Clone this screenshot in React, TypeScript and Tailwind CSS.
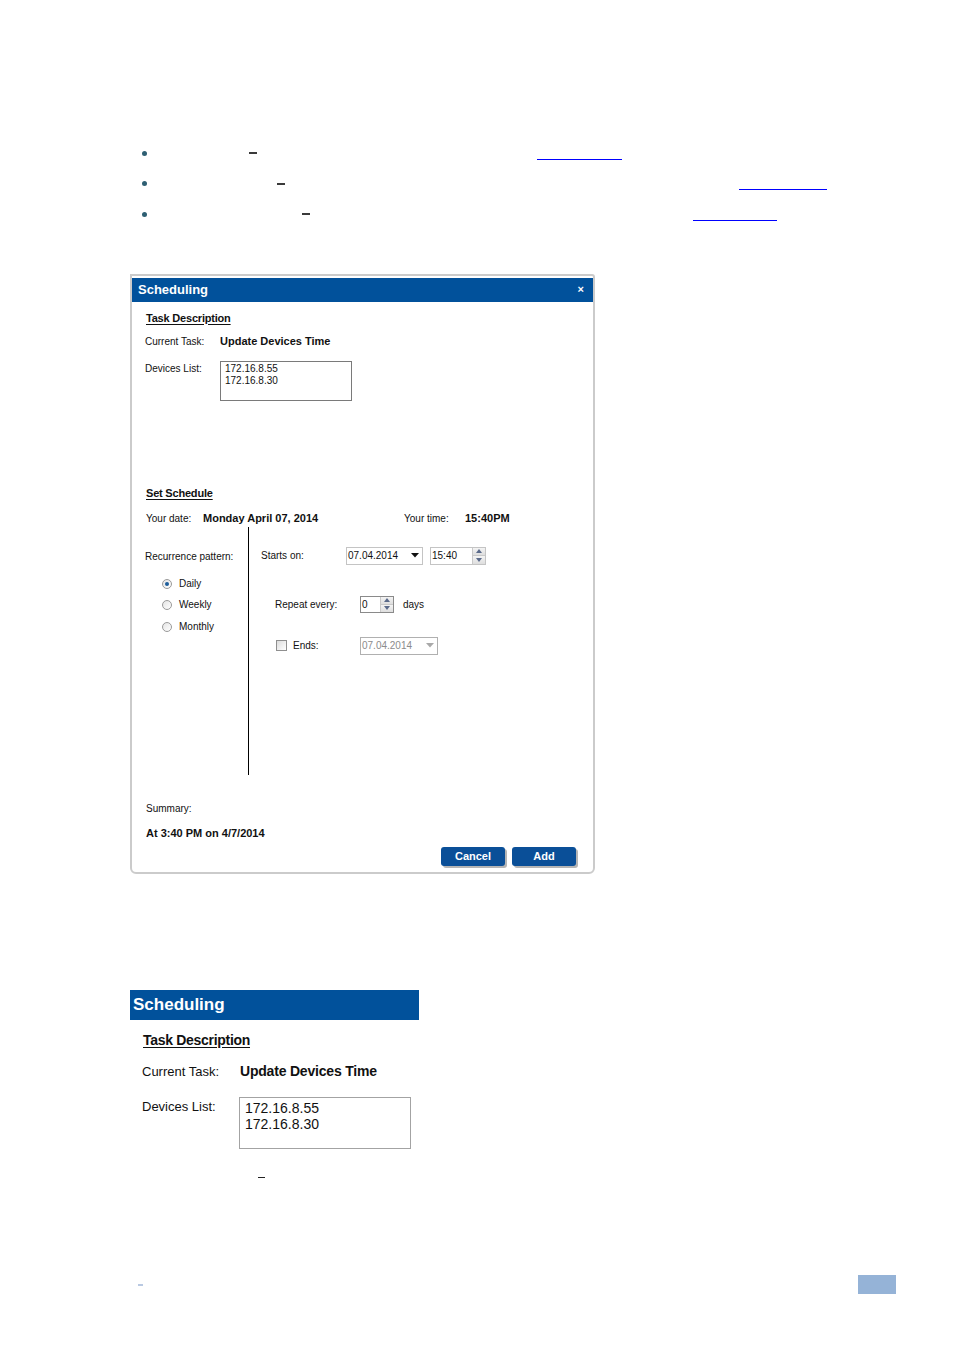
import React from 'react'

const FONT = { fontFamily: '"Liberation Sans", Arial, sans-serif' }

function BulletRow({ dash, link, linkW }: { dash: number; link: number; linkW: number }) {
  return (
    <div className="flex h-[30.5px] items-center">
      <span className="ml-[142px] h-[5px] w-[5px] rounded-full bg-[#2e5f73]" />
      <span className="h-[2px] w-[8px] bg-[#3a3a3a]" style={{ marginLeft: dash }} />
      <span className="mt-[12px] h-[1px] bg-[#0000ff]" style={{ marginLeft: link, width: linkW }} />
    </div>
  )
}

function DownArrow({ muted }: { muted?: boolean }) {
  return (
    <svg width="8" height="5" viewBox="0 0 8 5">
      <path d="M0 0 L8 0 L4 4.5 Z" fill={muted ? '#a9a9a9' : '#111'} />
    </svg>
  )
}

function SpinButtons() {
  return (
    <div className="flex w-[13px] flex-col border-l border-[#c9c9c9]">
      <div className="flex flex-1 items-center justify-center border-b border-[#c9c9c9] bg-gradient-to-b from-[#f4f4f4] to-[#dedede]">
        <svg width="6" height="4" viewBox="0 0 6 4"><path d="M0 4 L6 4 L3 0 Z" fill="#5a6a8a" /></svg>
      </div>
      <div className="flex flex-1 items-center justify-center bg-gradient-to-b from-[#f4f4f4] to-[#dedede]">
        <svg width="6" height="4" viewBox="0 0 6 4"><path d="M0 0 L6 0 L3 4 Z" fill="#5a6a8a" /></svg>
      </div>
    </div>
  )
}

function Radio({ label, checked, mt }: { label: string; checked?: boolean; mt: string }) {
  return (
    <div className={`flex h-[14px] items-center ${mt}`}>
      <span className="ml-[17px] flex h-[10px] w-[10px] items-center justify-center rounded-full border border-[#9a9a9a] bg-gradient-to-br from-[#e4e4e4] to-[#ffffff]">
        {checked && <span className="h-[4px] w-[4px] rounded-full bg-[#1d5d9a]" />}
      </span>
      <span className="ml-[7px] text-[10px] text-[#111]">{label}</span>
    </div>
  )
}

function Dialog() {
  return (
    <div className="ml-[130px] mt-[44px] flex h-[600px] w-[465px] flex-col rounded-b-[6px] rounded-tr-[3px] border-2 border-[#cbcbcb]">
      {/* title bar */}
      <div className="mt-[2px] flex h-[24px] items-center justify-between bg-[#01519b] pl-[6px] pr-[9px]">
        <span className="text-[13px] font-bold text-white">Scheduling</span>
        <span className="text-[11px] font-bold leading-none text-white">×</span>
      </div>

      <div className="flex flex-1 flex-col pl-[13px] text-[10px] text-[#111]">
        {/* task */}
        <div className="mt-[9px] ml-[1px] h-[14px] text-[11px] font-bold leading-[14px] tracking-[-0.2px]">
          <span className="underline underline-offset-2">Task Description</span>
        </div>
        <div className="mt-[10px] flex h-[14px] items-center">
          <span className="w-[75px]">Current Task:</span>
          <span className="text-[11px] font-bold">Update Devices Time</span>
        </div>
        <div className="mt-[12px] flex items-start">
          <span className="w-[75px]">Devices List:</span>
          <div className="h-[40px] w-[132px] border border-[#7a7a7a] pl-[4px] pt-[1px] leading-[12px]">
            <div>172.16.8.55</div>
            <div>172.16.8.30</div>
          </div>
        </div>

        {/* schedule */}
        <div className="mt-[85px] ml-[1px] h-[14px] text-[11px] font-bold leading-[14px] tracking-[-0.2px]">
          <span className="underline underline-offset-2">Set Schedule</span>
        </div>
        <div className="mt-[12px] flex h-[14px] items-center">
          <span className="ml-[1px] w-[57px]">Your date:</span>
          <span className="w-[201px] text-[11px] font-bold">Monday April 07, 2014</span>
          <span className="w-[61px]">Your time:</span>
          <span className="text-[11px] font-bold">15:40PM</span>
        </div>

        <div className="mt-[1px] flex h-[248px]">
          <div className="w-[104px] border-r border-black">
            <div className="mt-[23px] h-[14px] leading-[14px]">Recurrence pattern:</div>
            <Radio label="Daily" checked mt="mt-[13px]" />
            <Radio label="Weekly" mt="mt-[7px]" />
            <Radio label="Monthly" mt="mt-[8px]" />
          </div>
          <div className="flex-1">
            <div className="mt-[20px] flex h-[18px] items-center">
              <span className="ml-[12px] w-[85px]">Starts on:</span>
              <div className="flex h-[18px] w-[77px] items-center justify-between border border-[#c4c4c4] pl-[1px] pr-[3px]">
                <span>07.04.2014</span>
                <DownArrow />
              </div>
              <div className="ml-[7px] flex h-[18px] w-[56px] justify-between border border-[#c4c4c4]">
                <span className="pl-[1px] leading-[16px]">15:40</span>
                <SpinButtons />
              </div>
            </div>
            <div className="mt-[31px] flex h-[17px] items-center">
              <span className="ml-[26px] w-[85px]">Repeat every:</span>
              <div className="flex h-[17px] w-[34px] justify-between border border-[#8a8a8a]">
                <span className="pl-[1px] leading-[15px]">0</span>
                <SpinButtons />
              </div>
              <span className="ml-[9px]">days</span>
            </div>
            <div className="mt-[24px] flex h-[18px] items-center">
              <span className="ml-[27px] h-[11px] w-[11px] border border-[#8f8f8f] bg-gradient-to-br from-[#dcdcdc] to-[#ffffff]" />
              <span className="ml-[6px] w-[67px]">Ends:</span>
              <div className="flex h-[18px] w-[78px] items-center justify-between border border-[#b0b0b0] pl-[1px] pr-[3px] text-[#8c8c8c]">
                <span>07.04.2014</span>
                <DownArrow muted />
              </div>
            </div>
          </div>
        </div>

        {/* summary */}
        <div className="mt-[27px] ml-[1px] h-[14px] leading-[14px]">Summary:</div>
        <div className="mt-[10px] ml-[1px] h-[14px] text-[11px] font-bold leading-[14px]">At 3:40 PM on 4/7/2014</div>
        <div className="mt-[7px] flex justify-end gap-[7px] pr-[17px]">
          <button className="h-[19px] w-[64px] rounded-[3px] bg-[#0a4f98] text-[11px] font-bold text-white shadow-[2px_2px_0_#b5b5b5]">Cancel</button>
          <button className="h-[19px] w-[64px] rounded-[3px] bg-[#0a4f98] text-[11px] font-bold text-white shadow-[2px_2px_0_#b5b5b5]">Add</button>
        </div>
      </div>
    </div>
  )
}

function ZoomedCrop() {
  return (
    <div className="ml-[130px] mt-[116px] text-[#111]">
      <div className="flex h-[30px] w-[289px] items-center bg-[#01519b] pl-[3px]">
        <span className="text-[17px] font-bold text-white">Scheduling</span>
      </div>
      <div className="mt-[11px] ml-[13px] h-[18px] text-[14px] font-bold leading-[18px] tracking-[-0.3px]">
        <span className="underline underline-offset-2">Task Description</span>
      </div>
      <div className="mt-[14px] ml-[12px] flex h-[18px] items-center">
        <span className="w-[98px] text-[13px]">Current Task:</span>
        <span className="text-[14px] font-bold tracking-[-0.2px]">Update Devices Time</span>
      </div>
      <div className="mt-[16px] ml-[12px] flex items-start">
        <span className="mt-[1px] w-[97px] text-[13px] leading-[18px]">Devices List:</span>
        <div className="h-[52px] w-[172px] border border-[#a3a3a3] pl-[5px] pt-[2px] text-[14px] leading-[16px]">
          <div>172.16.8.55</div>
          <div>172.16.8.30</div>
        </div>
      </div>
      <div className="ml-[128px] mt-[28px] h-[1px] w-[7px] bg-[#222]" />
    </div>
  )
}

export default function App() {
  return (
    <div className="flex h-[1350px] w-[954px] flex-col bg-white" style={FONT}>
      <div className="pt-[138px]">
        <BulletRow dash={102} link={280} linkW={85} />
        <BulletRow dash={130} link={454} linkW={88} />
        <BulletRow dash={155} link={383} linkW={84} />
      </div>
      <Dialog />
      <ZoomedCrop />
      <div className="mt-auto mb-[56px] flex items-center justify-between pl-[138px] pr-[58px]">
        <span className="h-[2px] w-[5px] bg-[#b9c9e2]" />
        <span className="h-[19px] w-[38px] bg-[#95b3d7]" />
      </div>
    </div>
  )
}
